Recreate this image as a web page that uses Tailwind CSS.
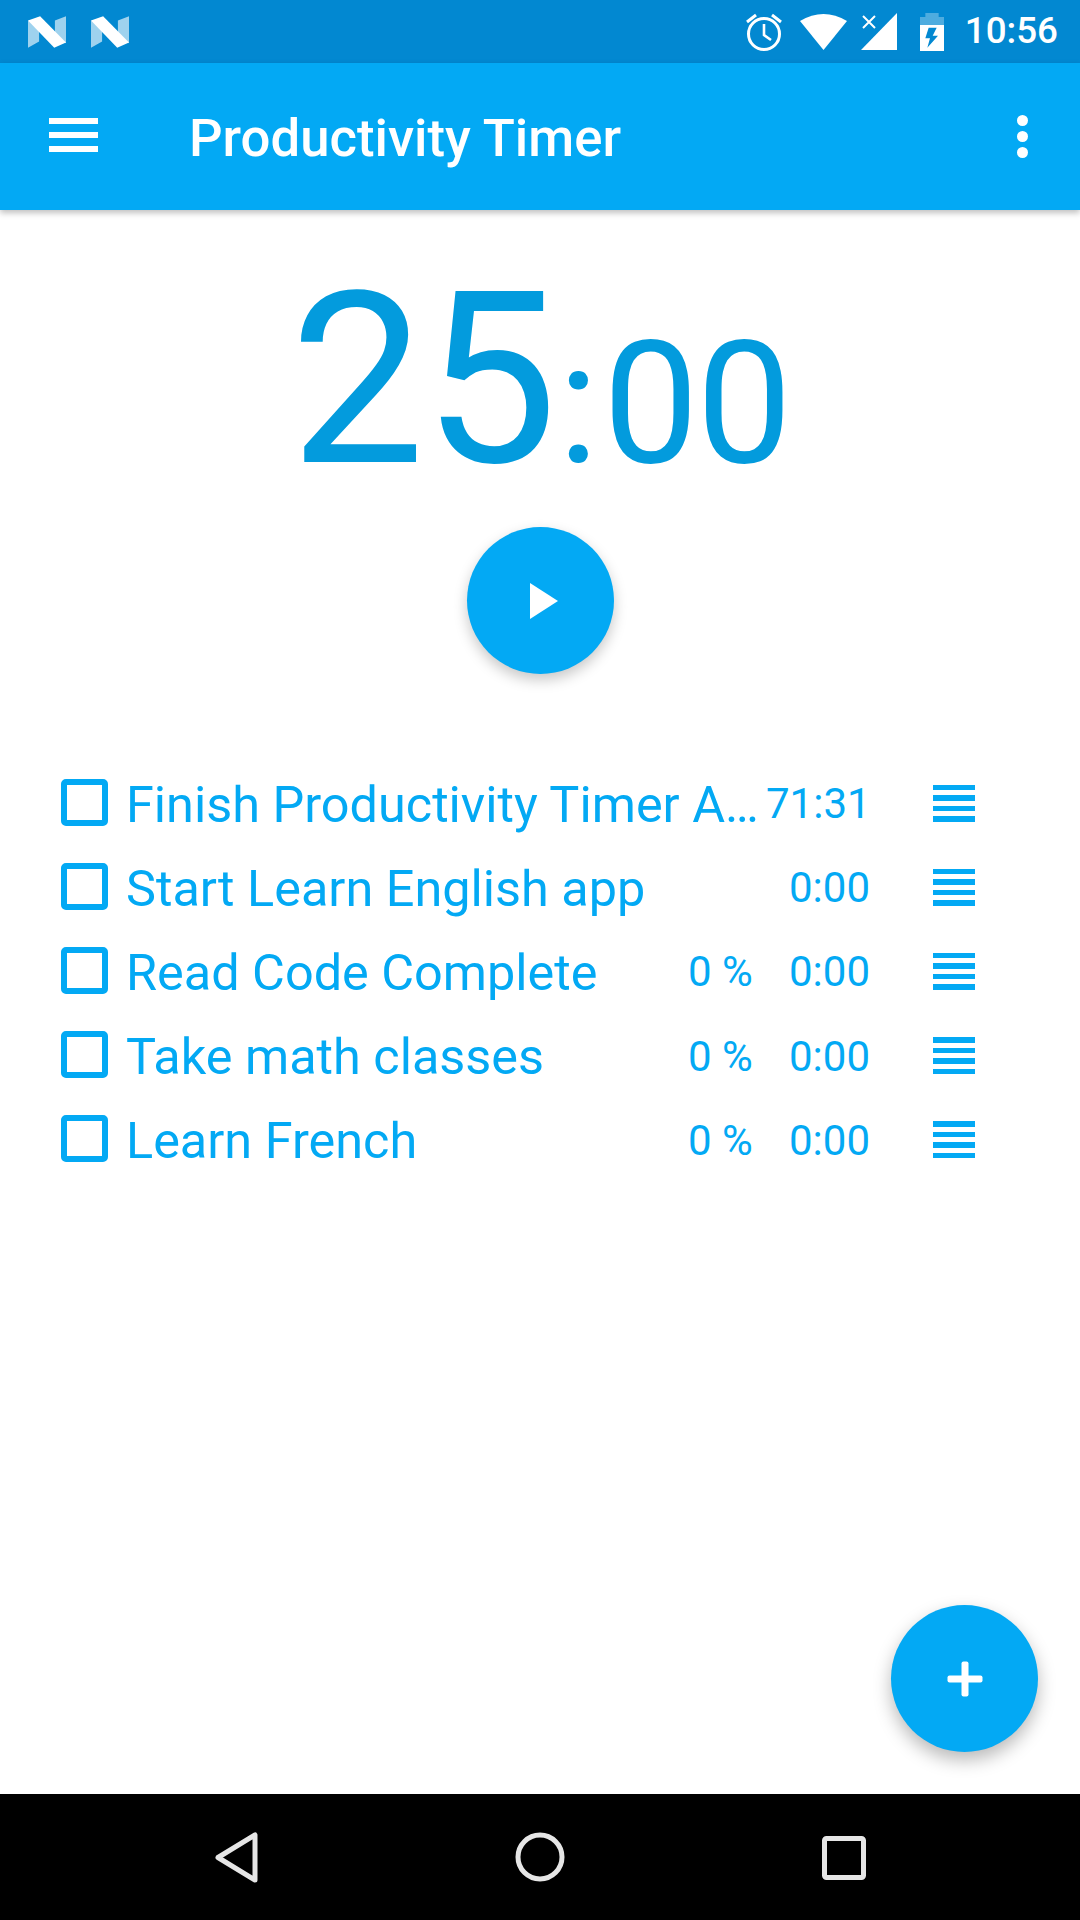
<!doctype html>
<html>
<head>
<meta charset="utf-8">
<script src="https://cdn.jsdelivr.net/npm/@tailwindcss/browser@4"></script>
</head>
<body class="m-0 bg-white">
<div class="w-[1080px] h-[1920px] flex flex-col overflow-hidden font-['Roboto',sans-serif] bg-white">
  <!-- status bar -->
  <div class="h-[63px] shrink-0 bg-[#0288D1] flex items-center text-white">
    <div class="flex gap-[25px] pl-[28px]">
      <svg class="w-[38px] h-[32px]" viewBox="0 0 113 93"><path fill="#fff" fill-opacity=".62" d="M0 12L33 25V75L0 93ZM113 0L80 12V60L113 80Z"/><path fill="#fff" d="M0 12L36 0L113 78L78 93Z"/></svg>
      <svg class="w-[38px] h-[32px]" viewBox="0 0 113 93"><path fill="#fff" fill-opacity=".62" d="M0 12L33 25V75L0 93ZM113 0L80 12V60L113 80Z"/><path fill="#fff" d="M0 12L36 0L113 78L78 93Z"/></svg>
    </div>
    <div class="ml-auto flex items-center pr-[22px]">
      <svg class="w-[38px] h-[38px] mr-[17px]" viewBox="0 0 38 38" fill="none" stroke="#fff"><circle cx="19" cy="21" r="15.500" stroke-width="3"/><path d="M19 11V22L26 27" stroke-width="2.600"/><path d="M2 9L11 2M36 9L27 2" stroke-width="3"/></svg>
      <svg class="w-[47px] h-[37px] mr-[14px]" viewBox="0 0 47 37"><path fill="#fff" d="M0 8Q23.500 -6 47 8L23.500 37Z"/></svg>
      <svg class="w-[36px] h-[37px] mr-[23px]" viewBox="0 0 36 37"><path fill="#fff" d="M36 0V37H0Z"/><path d="M2 3L14 15M14 3L2 15" stroke="#fff" stroke-width="2" fill="none"/></svg>
      <svg class="w-[24px] h-[38px] mr-[21px]" viewBox="0 0 72 114"><path fill="#fff" fill-opacity=".3" d="M16 0H56V12H72V36H0V12H16Z"/><path fill="#fff" fill-rule="evenodd" d="M0 36H72V114H0ZM26 44L16 76H30L22 104L54 68H38L50 44Z"/></svg>
      <span class="text-[36.750px] leading-none font-medium">10:56</span>
    </div>
  </div>
  <!-- app bar -->
  <div class="relative z-10 h-[147px] shrink-0 bg-[#03A9F4] flex items-center text-white shadow-[0_3px_6px_rgba(0,0,0,0.25)]">
    <div class="ml-[49px] w-[49px] flex flex-col gap-[8px] -mt-[3px]">
      <div class="h-[6px] bg-white"></div>
      <div class="h-[6px] bg-white"></div>
      <div class="h-[6px] bg-white"></div>
    </div>
    <div class="ml-[91px] text-[52.700px] leading-none font-medium mt-[3px]">Productivity Timer</div>
    <div class="ml-auto mr-[52px] flex flex-col gap-[5px] -mt-[1px]">
      <div class="w-[11px] h-[11px] rounded-full bg-white"></div>
      <div class="w-[11px] h-[11px] rounded-full bg-white"></div>
      <div class="w-[11px] h-[11px] rounded-full bg-white"></div>
    </div>
  </div>
  <!-- content -->
  <div class="relative flex-1 flex flex-col">
    <div class="mt-[60px] h-[220px] flex items-baseline justify-center text-[#039BDD] leading-none">
      <span class="text-[240px] tracking-[-2px] leading-[220px]">25</span><span class="text-[170px] leading-[220px] ml-[2px] mr-[4px]">:</span><span class="text-[170px] tracking-[-2px] leading-[220px]">00</span>
    </div>
    <div class="mt-[37px] self-center w-[147px] h-[147px] rounded-full bg-[#03A9F4] flex items-center justify-center shadow-[0_6px_14px_rgba(0,0,0,0.22)]">
      <svg class="w-[28px] h-[36px] ml-[7px]" viewBox="0 0 28 36"><path fill="#fff" d="M0 0L28 18L0 36Z"/></svg>
    </div>
    <div class="mt-[87px] flex flex-col text-[#03A9F4]">
      <div class="h-[84.200px] flex items-center pl-[61px]">
        <div class="w-[47px] h-[47px] -mt-[2px] shrink-0 rounded-[5px] border-[6px] border-[#03A9F4]"></div>
        <div class="ml-[18px] w-[640px] text-[50.400px] leading-[62px] mt-[3px] truncate">Finish Productivity Timer App</div>
        <div class="w-[104px] text-[42px] leading-none mt-[2px] text-right">71:31</div>
        <div class="ml-[63px] w-[42px] h-[37px] flex flex-col justify-between"><div class="h-[5.500px] bg-[#03A9F4]"></div><div class="h-[5.500px] bg-[#03A9F4]"></div><div class="h-[5.500px] bg-[#03A9F4]"></div><div class="h-[5.500px] bg-[#03A9F4]"></div></div>
      </div>
      <div class="h-[84.200px] flex items-center pl-[61px]">
        <div class="w-[47px] h-[47px] -mt-[2px] shrink-0 rounded-[5px] border-[6px] border-[#03A9F4]"></div>
        <div class="ml-[18px] w-[634px] text-[50.400px] leading-[62px] mt-[3px] truncate">Start Learn English app</div>
        <div class="w-[110px] text-[42px] leading-none mt-[2px] text-right">0:00</div>
        <div class="ml-[63px] w-[42px] h-[37px] flex flex-col justify-between"><div class="h-[5.500px] bg-[#03A9F4]"></div><div class="h-[5.500px] bg-[#03A9F4]"></div><div class="h-[5.500px] bg-[#03A9F4]"></div><div class="h-[5.500px] bg-[#03A9F4]"></div></div>
      </div>
      <div class="h-[84.200px] flex items-center pl-[61px]">
        <div class="w-[47px] h-[47px] -mt-[2px] shrink-0 rounded-[5px] border-[6px] border-[#03A9F4]"></div>
        <div class="ml-[18px] w-[562px] text-[50.400px] leading-[62px] mt-[3px] truncate">Read Code Complete</div>
        <div class="w-[72px] text-[42px] leading-none mt-[2px]">0 %</div>
        <div class="w-[110px] text-[42px] leading-none mt-[2px] text-right">0:00</div>
        <div class="ml-[63px] w-[42px] h-[37px] flex flex-col justify-between"><div class="h-[5.500px] bg-[#03A9F4]"></div><div class="h-[5.500px] bg-[#03A9F4]"></div><div class="h-[5.500px] bg-[#03A9F4]"></div><div class="h-[5.500px] bg-[#03A9F4]"></div></div>
      </div>
      <div class="h-[84.200px] flex items-center pl-[61px]">
        <div class="w-[47px] h-[47px] -mt-[2px] shrink-0 rounded-[5px] border-[6px] border-[#03A9F4]"></div>
        <div class="ml-[18px] w-[562px] text-[50.400px] leading-[62px] mt-[3px] truncate">Take math classes</div>
        <div class="w-[72px] text-[42px] leading-none mt-[2px]">0 %</div>
        <div class="w-[110px] text-[42px] leading-none mt-[2px] text-right">0:00</div>
        <div class="ml-[63px] w-[42px] h-[37px] flex flex-col justify-between"><div class="h-[5.500px] bg-[#03A9F4]"></div><div class="h-[5.500px] bg-[#03A9F4]"></div><div class="h-[5.500px] bg-[#03A9F4]"></div><div class="h-[5.500px] bg-[#03A9F4]"></div></div>
      </div>
      <div class="h-[84.200px] flex items-center pl-[61px]">
        <div class="w-[47px] h-[47px] -mt-[2px] shrink-0 rounded-[5px] border-[6px] border-[#03A9F4]"></div>
        <div class="ml-[18px] w-[562px] text-[50.400px] leading-[62px] mt-[3px] truncate">Learn French</div>
        <div class="w-[72px] text-[42px] leading-none mt-[2px]">0 %</div>
        <div class="w-[110px] text-[42px] leading-none mt-[2px] text-right">0:00</div>
        <div class="ml-[63px] w-[42px] h-[37px] flex flex-col justify-between"><div class="h-[5.500px] bg-[#03A9F4]"></div><div class="h-[5.500px] bg-[#03A9F4]"></div><div class="h-[5.500px] bg-[#03A9F4]"></div><div class="h-[5.500px] bg-[#03A9F4]"></div></div>
      </div>
    </div>
    <div class="absolute left-[891px] top-[1395px] w-[147px] h-[147px] rounded-full bg-[#03A9F4] flex items-center justify-center shadow-[0_8px_18px_rgba(0,0,0,0.28)]">
      <svg class="w-[36px] h-[36px]" viewBox="0 0 36 36"><rect x="0.500" y="14.500" width="35" height="7" rx="2" fill="#fff"/><rect x="14.500" y="0.500" width="7" height="35" rx="2" fill="#fff"/></svg>
    </div>
  </div>
  <!-- nav bar -->
  <div class="relative h-[126px] shrink-0 bg-black">
    <svg class="absolute left-[214px] top-[37px]" width="46" height="54" viewBox="0 0 46 54" fill="none"><path d="M41 4V49L4 26.500Z" stroke="#e6e6e6" stroke-width="5" stroke-linejoin="round"/></svg>
    <svg class="absolute left-[514px] top-[37px]" width="52" height="52" viewBox="0 0 52 52" fill="none"><circle cx="26" cy="26" r="22" stroke="#e6e6e6" stroke-width="5"/></svg>
    <svg class="absolute left-[820px] top-[40px]" width="48" height="48" viewBox="0 0 48 48" fill="none"><rect x="4.500" y="4.500" width="39" height="39" rx="2" stroke="#e6e6e6" stroke-width="5"/></svg>
  </div>
</div>
</body>
</html>
